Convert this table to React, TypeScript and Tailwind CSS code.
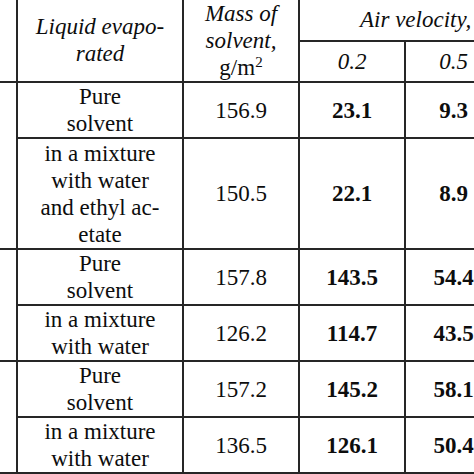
import React from "react";

const rows: { label: React.ReactNode; lines: number; mass: string; v1: string; v2: string; groupStart?: boolean }[] = [
  { label: <>Pure<br />solvent</>, lines: 2, mass: "156.9", v1: "23.1", v2: "9.3", groupStart: true },
  { label: <>in a mixture<br />with water<br />and ethyl ac-<br />etate</>, lines: 4, mass: "150.5", v1: "22.1", v2: "8.9" },
  { label: <>Pure<br />solvent</>, lines: 2, mass: "157.8", v1: "143.5", v2: "54.4", groupStart: true },
  { label: <>in a mixture<br />with water</>, lines: 2, mass: "126.2", v1: "114.7", v2: "43.5" },
  { label: <>Pure<br />solvent</>, lines: 2, mass: "157.2", v1: "145.2", v2: "58.1", groupStart: true },
  { label: <>in a mixture<br />with water</>, lines: 2, mass: "136.5", v1: "126.1", v2: "50.4" },
];

export default function App() {
  const b = "border-2 border-[#262626]";
  return (
    <div className="w-[474px] h-[474px] overflow-hidden bg-white text-[#0d0d0d] font-['Liberation_Serif','Times_New_Roman',serif]">
      <table className="table-fixed border-collapse text-[23px] leading-[27px] w-[512px] -mt-[1px] -ml-[1px]">
        <colgroup>
          <col className="w-[18px]" />
          <col className="w-[166px]" />
          <col className="w-[116px]" />
          <col className="w-[106px]" />
          <col className="w-[106px]" />
        </colgroup>
        <thead>
          <tr className="h-[42px]">
            <td rowSpan={2} className={`${b} border-l-0 border-t-0`}></td>
            <td rowSpan={2} className={`${b} border-t-0 text-center italic align-middle`}>
              Liquid evapo-<br />rated
            </td>
            <td rowSpan={2} className={`${b} border-t-0 text-center align-middle`}>
              <span className="italic">Mass of<br />solvent,</span>
              <br />
              g/m<sup className="text-[15px]">2</sup>
            </td>
            <td colSpan={2} className={`${b} border-t-0 border-r-0 italic text-left pl-[60px] whitespace-nowrap`}>
              Air velocity, m/s
            </td>
          </tr>
          <tr className="h-[41px]">
            <td className={`${b} text-center italic`}>0.2</td>
            <td className={`${b} border-r-0 text-center italic pr-[10px]`}>0.5</td>
          </tr>
        </thead>
        <tbody>
          {rows.map((r, i) => (
            <tr key={i} className={r.lines === 4 ? "h-[111px]" : "h-[56px]"}>
              {r.groupStart && <td rowSpan={2} className={`${b} border-l-0`}></td>}
              <td className={`${b} text-center align-middle`}>{r.label}</td>
              <td className={`${b} text-center align-middle`}>{r.mass}</td>
              <td className={`${b} text-center align-middle font-bold`}>{r.v1}</td>
              <td className={`${b} border-r-0 text-center align-middle font-bold pr-[10px]`}>{r.v2}</td>
            </tr>
          ))}
        </tbody>
      </table>
    </div>
  );
}
